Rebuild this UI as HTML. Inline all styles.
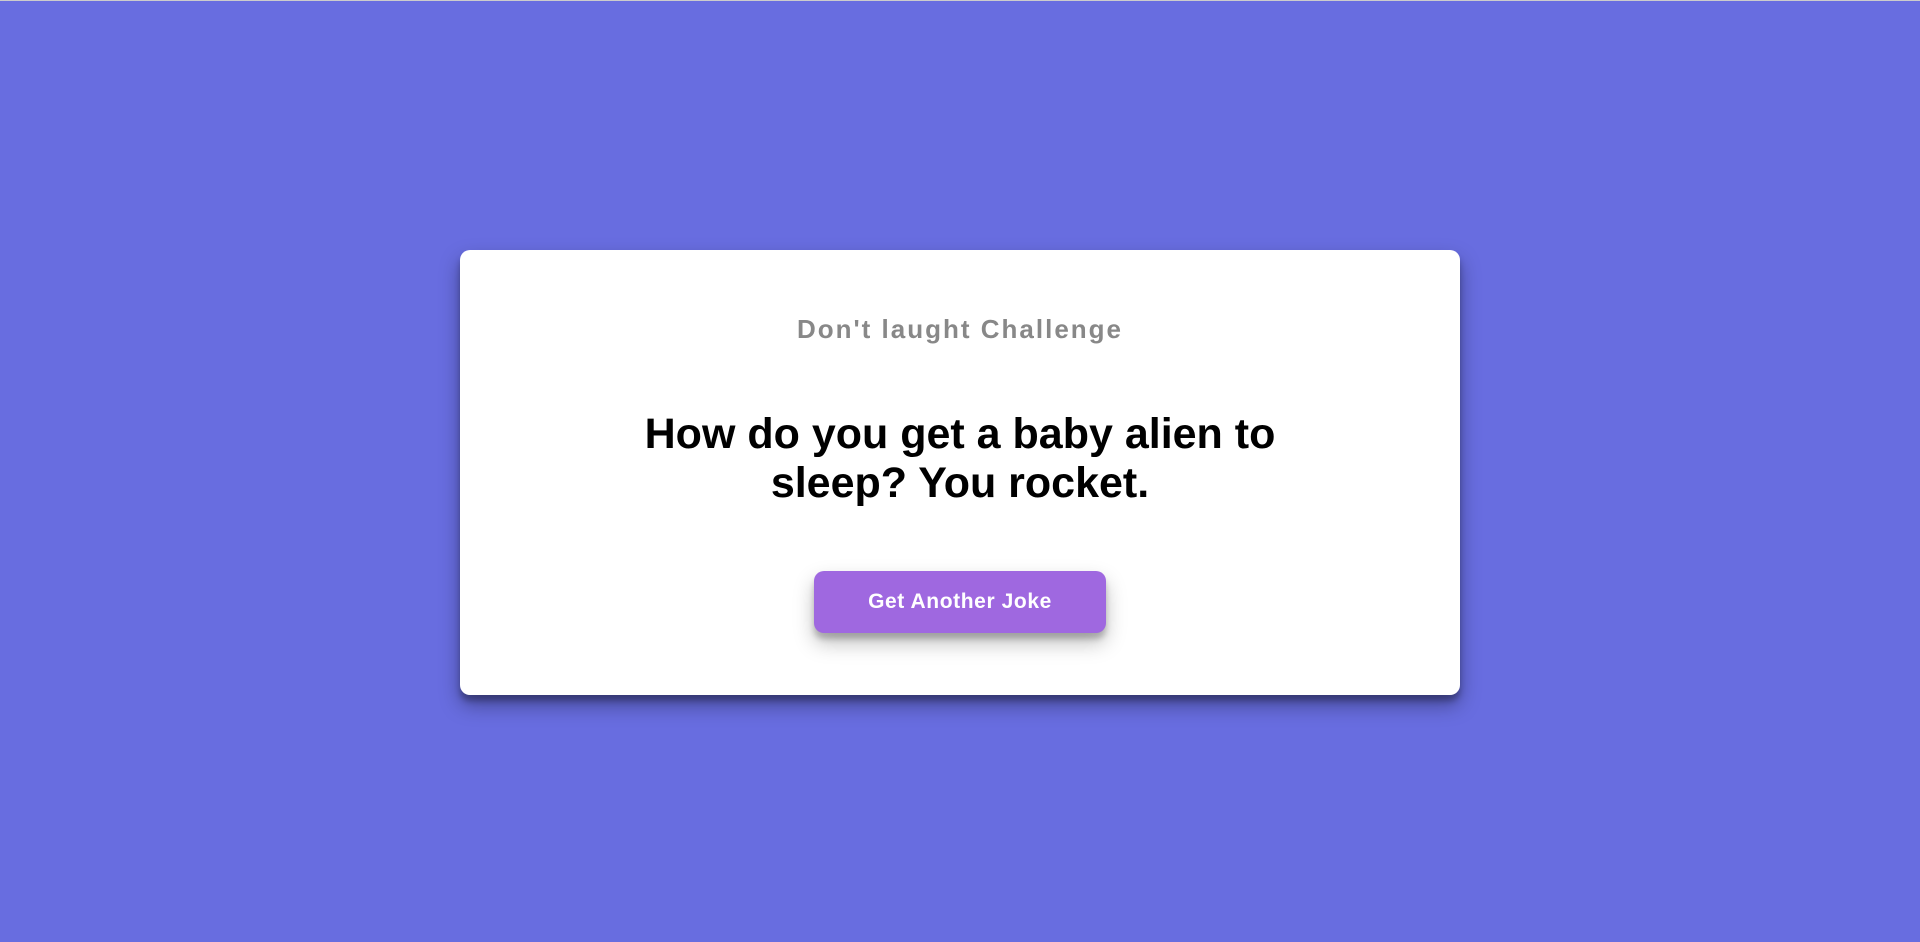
<!DOCTYPE html>
<html><head><meta charset="utf-8"><style>
html,body{margin:0;padding:0;}
body{width:1920px;height:942px;background:#686de0;border-top:1px solid #ccc;box-sizing:border-box;position:relative;font-family:"Liberation Sans",sans-serif;overflow:hidden;}
.card{position:absolute;left:460px;top:249px;width:1000px;height:445px;background:#fff;border-radius:10px;box-shadow:0 10px 20px rgba(0,0,0,0.35),0 6px 6px rgba(0,0,0,0.25);text-align:center;}
h3{margin:0;position:absolute;top:64px;left:0;right:0;font-size:26px;font-weight:bold;color:#888;letter-spacing:2px;}
.joke{position:absolute;top:160px;left:150px;right:150px;font-size:43px;font-weight:bold;line-height:49px;color:#000;}
.btn{position:absolute;left:354px;top:321px;width:292px;height:62px;background:#9f68e0;border-radius:10px;color:#fff;font-weight:bold;font-size:21px;letter-spacing:0.6px;line-height:62px;box-shadow:0 10px 20px rgba(0,0,0,0.25),0 6px 6px rgba(0,0,0,0.2);}
</style></head><body>
<div class="card">
<h3>Don't laught Challenge</h3>
<div class="joke">How do you get a baby alien to sleep? You rocket.</div>
<div class="btn">Get Another Joke</div>
</div>
</body></html>
